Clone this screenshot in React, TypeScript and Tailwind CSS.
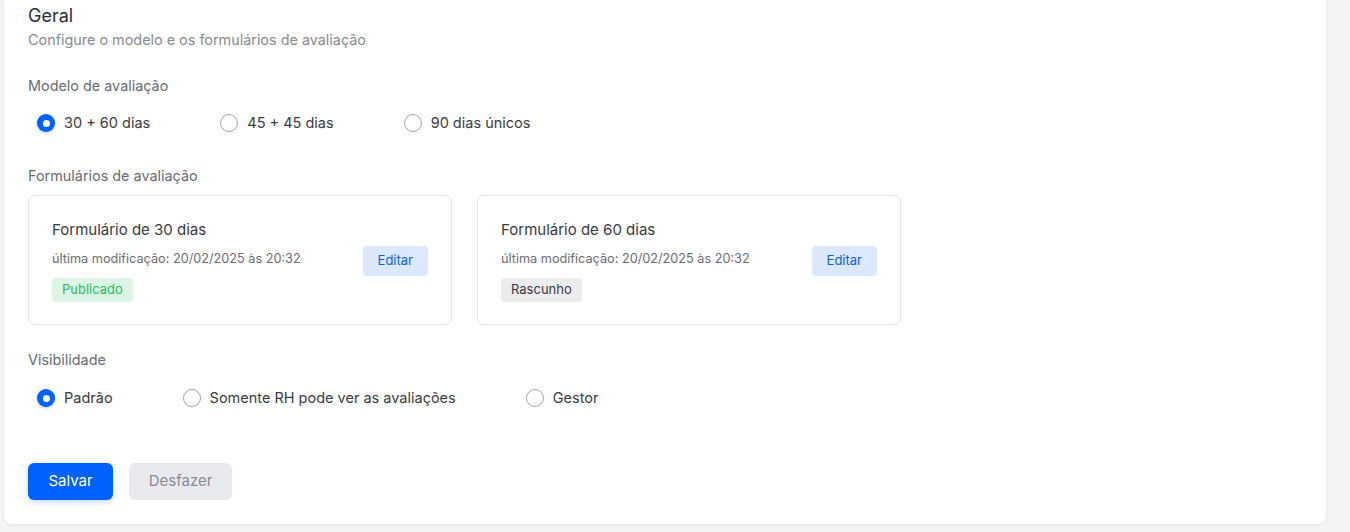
import { useState } from 'react';

type Option = { value: string; label: string };

function RadioGroup({
  options,
  value,
  onChange,
}: {
  options: Option[];
  value: string;
  onChange: (v: string) => void;
}) {
  return (
    <div className="flex items-center gap-[70px] pl-[9px] h-5">
      {options.map((opt) => {
        const checked = opt.value === value;
        return (
          <label
            key={opt.value}
            className="flex items-center gap-[9px] cursor-pointer"
            onClick={() => onChange(opt.value)}
          >
            {checked ? (
              <span className="w-[18px] h-[18px] rounded-full bg-[#0061fe] flex items-center justify-center shadow-[0_1px_3px_rgba(0,97,254,0.35)]">
                <span className="w-[7px] h-[7px] rounded-full bg-white" />
              </span>
            ) : (
              <span className="w-[18px] h-[18px] rounded-full border-[1.5px] border-[#a3a3ac] bg-white" />
            )}
            <span className="text-[14.5px] leading-5 text-[#3b3b45]">{opt.label}</span>
          </label>
        );
      })}
    </div>
  );
}

function FormCard({
  title,
  status,
}: {
  title: string;
  status: 'published' | 'draft';
}) {
  return (
    <div className="w-[424px] rounded-md border border-[#e4e4e8] bg-white px-[23px] pt-[23px] pb-[22px] flex items-center justify-between">
      <div>
        <div className="text-[15px] leading-[22px] text-[#3a3a44]">{title}</div>
        <div className="mt-[10px] text-[12.7px] leading-4 text-[#6c6c76]">
          última modificação: 20/02/2025 às 20:32
        </div>
        {status === 'published' ? (
          <span className="mt-[11px] inline-flex items-center h-6 px-[10px] rounded bg-[#dcf6e6] text-[13px] text-[#2bb964]">
            Publicado
          </span>
        ) : (
          <span className="mt-[11px] inline-flex items-center h-6 px-[10px] rounded bg-[#ececee] text-[13px] text-[#3a3a44]">
            Rascunho
          </span>
        )}
      </div>
      <button className="h-[30px] px-[15px] rounded bg-[#dbe8fe] text-[13px] text-[#0a62f0]">
        Editar
      </button>
    </div>
  );
}

export default function App() {
  const [model, setModel] = useState('30-60');
  const [visibility, setVisibility] = useState('padrao');

  return (
    <div
      className="min-h-[532px] bg-[#f4f4f7] pl-1 pr-6"
      style={{ fontFamily: 'Inter, "Noto Sans", sans-serif' }}
    >
      <div className="bg-white rounded-b-lg shadow-[0_1px_3px_rgba(30,30,60,0.08)] px-6 pt-1 pb-6">
        <h2 className="text-[18px] leading-6 text-[#2f2f3a]">Geral</h2>
        <p className="mt-[2px] text-[14.4px] leading-5 text-[#8a8a95]">
          Configure o modelo e os formulários de avaliação
        </p>

        <div className="mt-[26px] text-[14.4px] leading-5 text-[#6c6c76]">Modelo de avaliação</div>
        <div className="mt-[17px]">
          <RadioGroup
            value={model}
            onChange={setModel}
            options={[
              { value: '30-60', label: '30 + 60 dias' },
              { value: '45-45', label: '45 + 45 dias' },
              { value: '90', label: '90 dias únicos' },
            ]}
          />
        </div>

        <div className="mt-[33px] text-[14.4px] leading-5 text-[#6c6c76]">Formulários de avaliação</div>
        <div className="mt-[9px] flex gap-[25px]">
          <FormCard title="Formulário de 30 dias" status="published" />
          <FormCard title="Formulário de 60 dias" status="draft" />
        </div>

        <div className="mt-[25px] text-[14.4px] leading-5 text-[#6c6c76]">Visibilidade</div>
        <div className="mt-[18px]">
          <RadioGroup
            value={visibility}
            onChange={setVisibility}
            options={[
              { value: 'padrao', label: 'Padrão' },
              { value: 'rh', label: 'Somente RH pode ver as avaliações' },
              { value: 'gestor', label: 'Gestor' },
            ]}
          />
        </div>

        <div className="mt-[55px] flex gap-4">
          <button className="h-[37px] w-[85px] rounded-md bg-[#0061fe] text-[15px] text-white shadow-[0_2px_6px_rgba(0,97,254,0.25)]">
            Salvar
          </button>
          <button className="h-[37px] w-[103px] rounded-md bg-[#e9eaed] text-[15px] text-[#8b8b95]">
            Desfazer
          </button>
        </div>
      </div>
    </div>
  );
}
